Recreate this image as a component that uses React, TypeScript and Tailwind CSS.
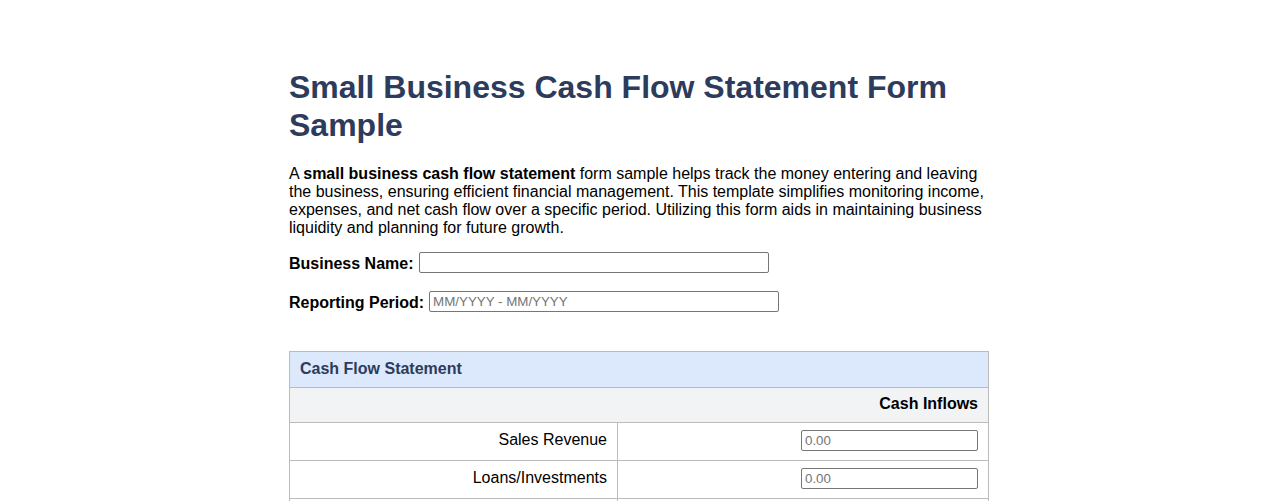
import React from 'react';

const rows = ['Sales Revenue', 'Loans/Investments', 'Other Income'];

export default function App() {
  return (
    <div className="min-h-screen bg-white text-black" style={{ fontFamily: '"Liberation Sans", Arial, sans-serif' }}>
      <div className="max-w-[700px] mx-auto pt-[68px] pb-10">
        <h1 className="text-[32px] leading-[38px] font-bold text-[#2d3b5c]">
          Small Business Cash Flow Statement Form Sample
        </h1>

        <p className="mt-[21px] text-[16px] leading-[18px]">
          A <strong>small business cash flow statement</strong> form sample helps track the money entering and leaving
          the business, ensuring efficient financial management. This template simplifies monitoring income,
          expenses, and net cash flow over a specific period. Utilizing this form aids in maintaining business
          liquidity and planning for future growth.
        </p>

        {/* header fields */}
        <div className="mt-[15px] flex items-center gap-[5px]">
          <label className="pt-[3px] leading-[18px] font-bold text-[16px]">Business Name:</label>
          <input type="text" className="w-[350px] h-[21px] border border-[#767676] rounded-[2px] px-[3px] text-[13.33px] outline-none" />
        </div>
        <div className="mt-[18px] flex items-center gap-[5px]">
          <label className="pt-[3px] leading-[18px] font-bold text-[16px]">Reporting Period:</label>
          <input
            type="text"
            placeholder="MM/YYYY - MM/YYYY"
            className="w-[350px] h-[21px] border border-[#767676] rounded-[2px] px-[3px] text-[13.33px] placeholder:text-[#757575] outline-none"
          />
        </div>

        <table className="mt-[39px] w-full border-collapse text-[16px]">
          <thead>
            <tr>
              <th colSpan={2} className="h-[36px] px-[10px] pb-[2px] bg-[#dce8fb] border border-[#bbbbbb] text-left font-bold text-[#2d3b5c]">
                Cash Flow Statement
              </th>
            </tr>
          </thead>
          <tbody>
            <tr>
              <td colSpan={2} className="h-[35px] px-[10px] pb-[2px] bg-[#f2f3f5] border border-[#bbbbbb] text-right font-bold">
                Cash Inflows
              </td>
            </tr>
            {rows.map(r => (
              <tr key={r}>
                <td className="w-[328px] h-[38px] px-[10px] pb-[3px] border border-[#bbbbbb] text-right">{r}</td>
                <td className="h-[38px] px-[10px] pb-[3px] border border-[#bbbbbb] text-right">
                  <input
                    type="text"
                    placeholder="0.00"
                    className="w-[177px] h-[21px] border border-[#767676] rounded-[2px] px-[3px] text-[13.33px] placeholder:text-[#757575] outline-none"
                  />
                </td>
              </tr>
            ))}
          </tbody>
        </table>
      </div>
    </div>
  );
}
